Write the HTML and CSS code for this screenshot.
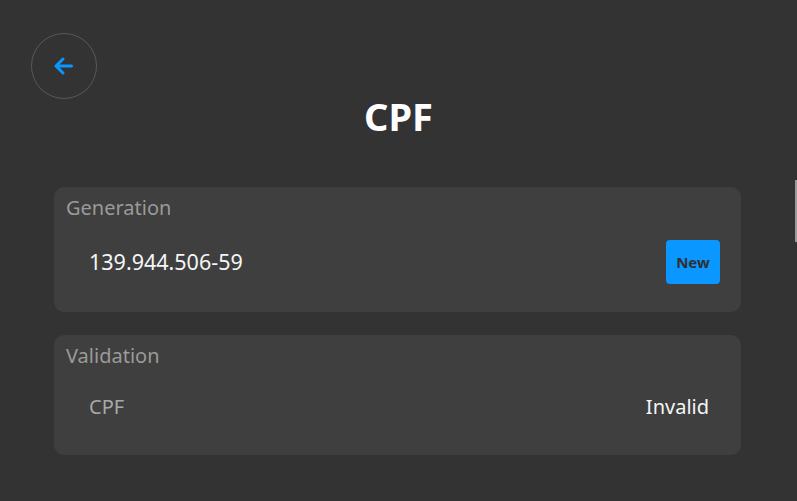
FILE: index.html
```html
<!DOCTYPE html>
<html>
<head>
<meta charset="utf-8">
<link rel="stylesheet" href="styles.css">
</head>
<body>
<div class="page">
  <div class="top">
    <button class="back" aria-label="Back">
      <svg width="24" height="24" viewBox="0 0 24 24"><path d="M20.5 12H5M12 5L5 12L12 19" fill="none" stroke="#0a96ff" stroke-width="3" stroke-linecap="round" stroke-linejoin="round"/></svg>
    </button>
  </div>
  <h1 class="title">CPF</h1>
  <section class="card gen">
    <div class="label">Generation</div>
    <div class="row">
      <span class="value num">139.944.506-59</span>
      <button class="new">New</button>
    </div>
  </section>
  <section class="card val">
    <div class="label">Validation</div>
    <div class="row">
      <span class="muted">CPF</span>
      <span class="value">Invalid</span>
    </div>
  </section>
  <div class="scroll"></div>
</div>
</body>
</html>
```
FILE: styles.css
```css
* { box-sizing: border-box; }
html, body { margin: 0; height: 100%; }
body {
  background: #333333;
  font-family: "Noto Sans", "Open Sans", sans-serif;
  color: #ffffff;
  overflow: hidden;
}
.page {
  position: relative;
  padding: 33px 56px 0 54px;
}
.top { height: 66px; margin-left: -23px; }
.back {
  width: 66px; height: 66px;
  border-radius: 50%;
  border: 1px solid #595959;
  background: transparent;
  display: flex; align-items: center; justify-content: center;
  padding: 0 2px 0 0;
}
.title {
  margin: -8px 0 0 0;
  text-align: center;
  font-size: 38px;
  font-weight: 700;
  line-height: 50px;
  padding-left: 2px;
}
.card {
  background: #3f3f3f;
  border-radius: 10px;
  padding: 8px 12px 0 12px;
}
.gen { margin-top: 46px; height: 125px; }
.val { margin-top: 23px; height: 120px; }
.label {
  color: #9a9a9a;
  font-size: 20px;
  line-height: 26px;
}
.row {
  display: flex;
  align-items: center;
  justify-content: space-between;
  padding: 0 9px 0 23px;
}
.gen .row { margin-top: 19px; }
.val .row { margin-top: 24px; padding-right: 20px; }
.value { font-size: 20px; color: #f5f5f5; }
.num { font-size: 21.5px; position: relative; top: -1px; }
.muted { font-size: 20px; color: #a8a8a8; }
.new {
  width: 54px; height: 44px;
  background: #0a97ff;
  border: none;
  border-radius: 4px;
  color: #303030;
  font-family: "Noto Sans", sans-serif;
  font-weight: 700;
  font-size: 15px;
  padding: 0;
}
.scroll {
  position: absolute;
  right: 0; top: 180px;
  width: 2px; height: 62px;
  background: #9a9a9a;
}
```
